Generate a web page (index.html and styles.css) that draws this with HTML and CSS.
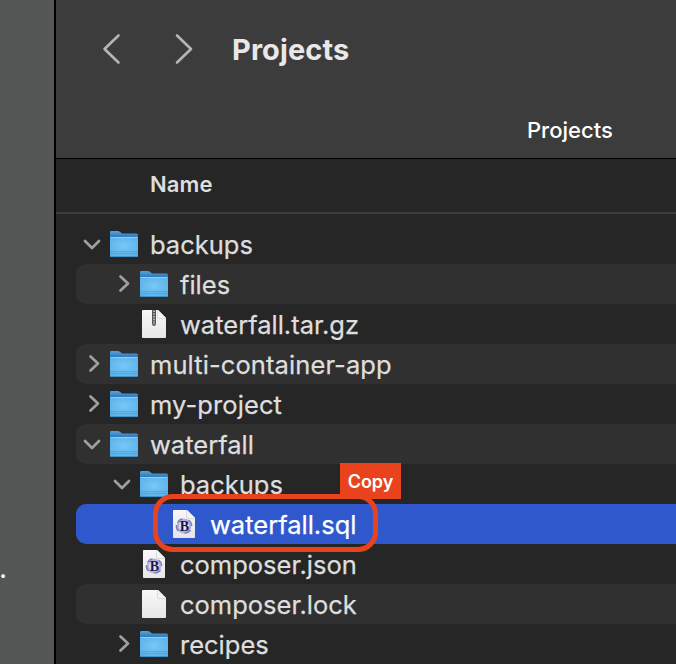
FILE: index.html
```html
<!DOCTYPE html>
<html lang="en">
<head>
<meta charset="utf-8">
<title>Projects</title>
<link rel="stylesheet" href="styles.css">
</head>
<body>
<svg width="0" height="0" class="defs" aria-hidden="true">
  <defs>
    <linearGradient id="fback" x1="0" y1="0" x2="0" y2="1"><stop offset="0" stop-color="#55a5dc"/><stop offset=".2" stop-color="#337dbf"/><stop offset="1" stop-color="#347cb6"/></linearGradient>
    <radialGradient id="ffront" cx=".5" cy=".45" r=".75"><stop offset="0" stop-color="#78c8f8"/><stop offset="1" stop-color="#56ace4"/></radialGradient>
    <linearGradient id="paper" x1="0" y1="0" x2="0" y2="1"><stop offset="0" stop-color="#f8f8f8"/><stop offset="1" stop-color="#e6e6e6"/></linearGradient>
    <symbol id="folder" viewBox="0 0 30 30">
      <rect x="1.2" y="5" width="27.8" height="23.6" rx="1.6" fill="#151515" opacity=".5"/>
      <path d="M1 3.400Q1 2 2.400 2H9q1 0 1.800.8L12.500 4q.8.600 1.800.600H27.500Q29 4.600 29 6.100V26.400Q29 28 27.400 28H2.600Q1 28 1 26.400Z" fill="url(#fback)"/>
      <path d="M1 9.200q0-1.200 1.400-1.200h25.200Q29 8 29 9.200v17.200q0 1.600-1.600 1.600H2.600Q1 28 1 26.400Z" fill="url(#ffront)"/>
      <path d="M1.500 8.500h27" stroke="#86d2fa" stroke-width="1"/>
      <path d="M1 22.500h28M1 24.500h28" stroke="#479bd0" stroke-width=".6"/>
      <path d="M2 27.600h26" stroke="#3987be" stroke-width=".8"/>
    </symbol>
    <symbol id="file" viewBox="0 0 30 30">
      <path d="M3 2Q3 1 4 1H19L27 9V28Q27 29 26 29H4Q3 29 3 28Z" fill="url(#paper)"/>
      <path d="M18.500 1v7q0 1.500 1.500 1.500h7Z" fill="#c0c0c0"/>
      <path d="M19 1 27 9H20Q19 9 19 8Z" fill="#f4f4f4"/>
    </symbol>
    <symbol id="zip" viewBox="0 0 30 30">
      <use href="#file"/>
      <path d="M13 1h4v13q0 3-2 3t-2-3Z" fill="#555"/>
      <path d="M15 1.500V11" stroke="#aeaeae" stroke-width="2" stroke-dasharray="1.500 1.200"/>
      <path d="M15 11.500v4" stroke="#969696" stroke-width="1.800"/>
    </symbol>
    <symbol id="bbfile" viewBox="0 0 30 30">
      <path d="M4 2Q4 1 4.800 1H18L26 9V28Q26 29 25.200 29H4.800Q4 29 4 28Z" fill="url(#paper)"/>
      <path d="M17.500 1v7q0 1.500 1.500 1.500h7Z" fill="#c0c0c0"/>
      <path d="M18 1 26 9H19Q18 9 18 8Z" fill="#f4f4f4"/>
      <circle cx="15" cy="17" r="6.200" fill="#e2e2f4" stroke="#b4b4dc" stroke-width="2.400"/>
      <path d="M8.500 13.500q2-3.500 5-3.500M19.500 11q3.500 2.500 3 6M21.500 21q-2.500 3-6 3M9.500 22q-2.500-2.500-2-6" fill="none" stroke="#7f7fbd" stroke-width="1.500"/>
      <text x="15.300" y="21.600" class="glyph">B</text>
    </symbol>
    <symbol id="down" viewBox="0 0 20 40"><path d="M3 17 10 24 17 17" class="chev"/></symbol>
    <symbol id="right" viewBox="0 0 20 40"><path d="M8.500 12.500 16 19.500 8.500 26.500" class="chev"/></symbol>
  </defs>
</svg>
<div class="screen">
  <aside class="backdrop">.</aside>
  <main class="window">
    <header class="titlebar">
      <div class="toolbar">
        <svg class="nav" viewBox="0 0 100 40"><path d="M24.500 7.500 10.500 21 24.500 34.500M83 7.500 97 21 83 34.500"/></svg>
        <h1>Projects</h1>
      </div>
      <div class="tab">Projects</div>
    </header>
    <div class="colhead">Name</div>
    <div class="list">
      <div class="row"><svg class="tw"><use href="#down"/></svg><svg class="ic"><use href="#folder"/></svg><span>backups</span></div>
      <div class="row d1"><svg class="tw"><use href="#right"/></svg><svg class="ic"><use href="#folder"/></svg><span>files</span></div>
      <div class="row d1"><i class="tw"></i><svg class="ic"><use href="#zip"/></svg><span>waterfall.tar.gz</span></div>
      <div class="row"><svg class="tw"><use href="#right"/></svg><svg class="ic"><use href="#folder"/></svg><span class="wide">multi-container-app</span></div>
      <div class="row"><svg class="tw"><use href="#right"/></svg><svg class="ic"><use href="#folder"/></svg><span class="wide">my-project</span></div>
      <div class="row"><svg class="tw"><use href="#down"/></svg><svg class="ic"><use href="#folder"/></svg><span>waterfall</span></div>
      <div class="row d1"><svg class="tw"><use href="#down"/></svg><svg class="ic"><use href="#folder"/></svg><span>backups</span></div>
      <div class="row d2 selected"><i class="tw"></i><svg class="ic"><use href="#bbfile"/></svg><span>waterfall.sql</span>
        <div class="ring"></div><div class="tag">Copy</div></div>
      <div class="row d1"><i class="tw"></i><svg class="ic"><use href="#bbfile"/></svg><span>composer.json</span></div>
      <div class="row d1"><i class="tw"></i><svg class="ic"><use href="#file"/></svg><span>composer.lock</span></div>
      <div class="row d1"><svg class="tw"><use href="#right"/></svg><svg class="ic"><use href="#folder"/></svg><span>recipes</span></div>
    </div>
  </main>
</div>
</body>
</html>
```
FILE: styles.css
```css
* { box-sizing: border-box; }
body { margin: 0; font-family: Inter, "Liberation Sans", sans-serif; overflow: hidden; }
.defs { position: absolute; }
.screen { display: flex; width: 676px; height: 664px; overflow: hidden; }
.backdrop { width: 54px; flex: none; background: #545756; color: #f5f5f5; font-size: 28px; line-height: 30px; padding-top: 553px; text-indent: -1px; }
.window { flex: 1; min-width: 0; background: #262626; border-left: 2px solid #000; }
.titlebar { height: 159px; background: #3c3c3c; border-bottom: 1px solid #000; }
.toolbar { display: flex; align-items: center; height: 100px; padding-left: 38px; }
.nav { width: 100px; height: 40px; fill: none; stroke: #b5b5b5; stroke-width: 2.6; stroke-linecap: round; stroke-linejoin: round; margin-top: -4px; }
h1 { margin: 0 0 0 38px; font-size: 29px; line-height: 40px; font-weight: 700; letter-spacing: .1px; color: #e8e8e8; }
.tab { margin-left: 471px; padding-top: 15px; font-size: 22px; line-height: 30px; font-weight: 500; letter-spacing: 0; color: #fff; }
.colhead { height: 55px; padding-left: 94px; font-size: 22px; line-height: 51px; font-weight: 600; letter-spacing: .1px; color: #dedede; border-bottom: 2px solid #3c3c3c; }
.list { padding: 10px 0 0 20px; }
.row { position: relative; display: flex; align-items: center; height: 40px; padding-left: 6px; border-radius: 10px 0 0 10px; color: #dedede; font-size: 25.5px; white-space: nowrap; }
.row span { align-self: flex-start; line-height: 42px; -webkit-text-stroke: .25px currentColor; }
.row .wide { letter-spacing: .1px; }
.row:nth-child(even) { background: #303030; }
.d1 { padding-left: 36px; }
.d2 { padding-left: 66px; }
.row.selected { background: #2f58cd; color: #fff; z-index: 1; }
.tw { width: 20px; height: 40px; flex: none; }
.ic { width: 30px; height: 30px; flex: none; margin: 0 11px 0 7px; }
.chev { fill: none; stroke: #a0a0a0; stroke-width: 2.7; stroke-linecap: round; stroke-linejoin: round; }
.glyph { font: bold 14px "Liberation Serif", serif; fill: #17174d; text-anchor: middle; -webkit-text-stroke: 0; }
.ring { position: absolute; left: 77px; top: -10px; width: 225px; height: 58px; border: 5px solid #e9431e; border-radius: 20px; }
.tag { position: absolute; left: 264px; top: -41px; width: 61px; height: 36px; background: #e9431e; color: #fff; font-size: 18px; font-weight: 600; line-height: 38px; text-align: center; letter-spacing: -.1px; }
```
